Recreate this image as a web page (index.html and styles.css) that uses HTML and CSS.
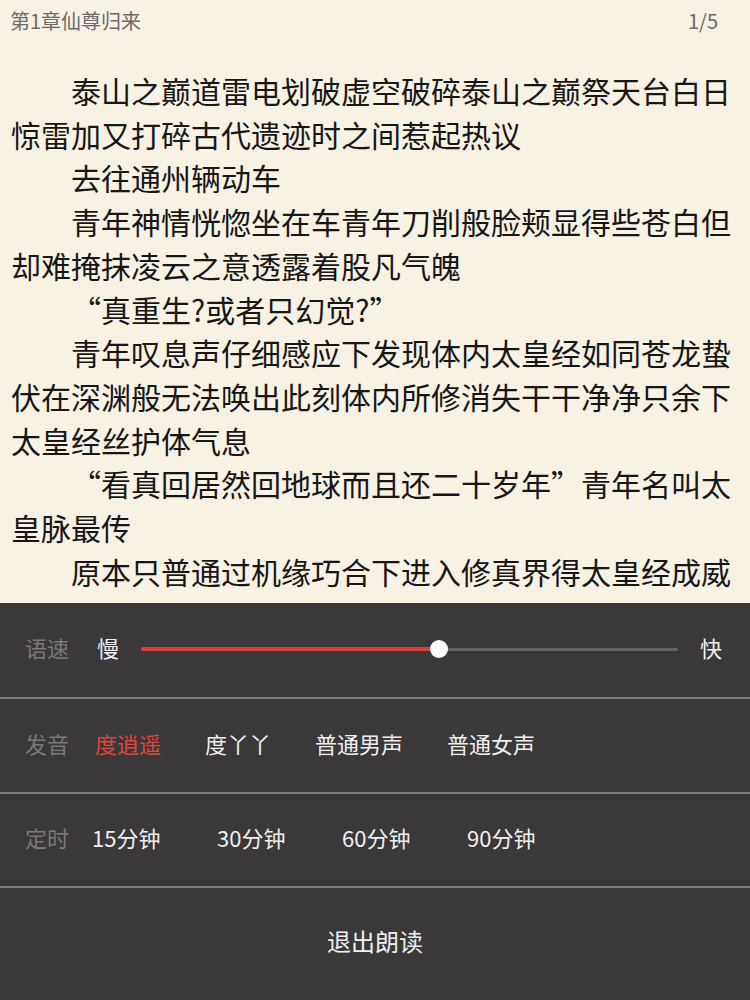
FILE: index.html
```html
<!DOCTYPE html>
<html lang="zh-CN">
<head>
<meta charset="utf-8">
<title>第1章仙尊归来</title>
<link rel="stylesheet" href="styles.css">
</head>
<body>
<div class="page">
  <div class="reader">
    <div class="reader-head">
      <span class="chapter">第1章仙尊归来</span>
      <span class="pager">1/5</span>
    </div>
    <div class="article">
      <p>泰山之巅道雷电划破虚空破碎泰山之巅祭天台白日惊雷加又打碎古代遗迹时之间惹起热议</p>
      <p>去往通州辆动车</p>
      <p>青年神情恍惚坐在车青年刀削般脸颊显得些苍白但却难掩抹凌云之意透露着股凡气魄</p>
      <p>“真重生?或者只幻觉?”</p>
      <p>青年叹息声仔细感应下发现体内太皇经如同苍龙蛰伏在深渊般无法唤出此刻体内所修消失干干净净只余下太皇经丝护体气息</p>
      <p>“看真回居然回地球而且还二十岁年”青年名叫太皇脉最传</p>
      <p>原本只普通过机缘巧合下进入修真界得太皇经成威</p>
    </div>
  </div>
  <div class="panel">
    <div class="row">
      <span class="label">语速</span>
      <span class="opt">慢</span>
      <div class="slider">
        <div class="track"></div>
        <div class="fill" style="width:55.5%"></div>
        <div class="knob" style="left:55.5%"></div>
      </div>
      <span class="opt">快</span>
    </div>
    <div class="row">
      <span class="label">发音</span>
      <div class="voices">
        <span class="opt active">度逍遥</span>
        <span class="opt">度丫丫</span>
        <span class="opt">普通男声</span>
        <span class="opt">普通女声</span>
      </div>
    </div>
    <div class="row">
      <span class="label">定时</span>
      <div class="timers">
        <span class="opt timer">15分钟</span>
        <span class="opt timer">30分钟</span>
        <span class="opt timer">60分钟</span>
        <span class="opt timer">90分钟</span>
      </div>
    </div>
    <div class="row exit">
      <span class="exit-text">退出朗读</span>
    </div>
  </div>
</div>
</body>
</html>
```
FILE: styles.css
```css
html, body {
  margin: 0;
  padding: 0;
}
body {
  font-family: "Noto Sans CJK SC", "Noto Sans", sans-serif;
  background: #f8f2e5;
}
.page {
  width: 750px;
  height: 1000px;
  display: flex;
  flex-direction: column;
  overflow: hidden;
}
.reader {
  flex: 1;
  overflow: hidden;
  background: #f8f2e5;
}
.reader-head {
  display: flex;
  justify-content: space-between;
  padding: 9px 32px 0 10px;
  font-size: 20px;
  line-height: 24px;
  color: #6a6a6a;
}
.article {
  margin-top: 36px;
  padding: 0 19px 0 11px;
  font-size: 30px;
  line-height: 43.7px;
  color: #161616;
}
.article p {
  margin: 0;
  text-indent: 2em;
}
.panel {
  height: 397px;
  flex: none;
  background: #3a3839;
  display: flex;
  flex-direction: column;
}
.row {
  height: 94px;
  box-sizing: border-box;
  display: flex;
  align-items: center;
  padding-left: 25px;
  padding-bottom: 6px;
  font-size: 22px;
  line-height: 30px;
  flex: none;
}
.row + .row {
  border-top: 2px solid #7e7d7e;
}
.row:nth-child(2) { height: 95px; }
.row:nth-child(3) { height: 94px; }
.row.exit {
  flex: 1;
  padding-left: 0;
  justify-content: center;
}
.label {
  width: 70px;
  flex: none;
  color: #7a7879;
}
.opt {
  color: #f0f0f0;
}
.opt.active {
  color: #e0443e;
}
.slider {
  position: relative;
  flex: 1;
  height: 20px;
  margin: 4px 22px 0;
}
.track {
  position: absolute;
  left: 0;
  right: 0;
  top: 9px;
  height: 3px;
  background: #666566;
  border-radius: 2px;
}
.fill {
  position: absolute;
  left: 0;
  top: 8px;
  height: 4px;
  background: #d9403a;
  border-radius: 2px;
}
.knob {
  position: absolute;
  top: 1px;
  width: 18px;
  height: 18px;
  margin-left: -9px;
  border-radius: 50%;
  background: #ffffff;
}
.row:first-child {
  padding-right: 28px;
}
.row:first-child .label {
  width: 72px;
}
.voices {
  display: flex;
  gap: 44px;
}
.timers {
  display: flex;
  margin-left: -3px;
}
.timer {
  width: 125px;
}
.exit-text {
  font-size: 24px;
  color: #f0f0f0;
}
```
